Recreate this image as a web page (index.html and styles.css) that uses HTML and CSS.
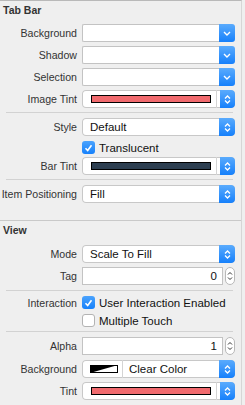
FILE: index.html
```html
<!DOCTYPE html>
<html lang="en">
<head>
    <meta charset="UTF-8">
    <meta name="viewport" content="width=device-width, initial-scale=1.0">
    <title>Attributes Inspector</title>
    <link rel="stylesheet" href="styles.css">
</head>
<body>
    <div class="inspector">
        <!-- Tab Bar section -->
        <h2 class="section-title">Tab Bar</h2>

        <div class="row first">
            <span class="label">Background</span>
            <div class="combo"><span class="combo-field"></span><span class="blue-btn"><svg width="8" height="5" viewBox="0 0 8 5"><path d="M1 1l3 3 3-3" fill="none" stroke="#fff" stroke-width="1.4"/></svg></span></div>
        </div>
        <div class="row">
            <span class="label">Shadow</span>
            <div class="combo"><span class="combo-field"></span><span class="blue-btn"><svg width="8" height="5" viewBox="0 0 8 5"><path d="M1 1l3 3 3-3" fill="none" stroke="#fff" stroke-width="1.4"/></svg></span></div>
        </div>
        <div class="row">
            <span class="label">Selection</span>
            <div class="combo"><span class="combo-field"></span><span class="blue-btn"><svg width="8" height="5" viewBox="0 0 8 5"><path d="M1 1l3 3 3-3" fill="none" stroke="#fff" stroke-width="1.4"/></svg></span></div>
        </div>
        <div class="row">
            <span class="label">Image Tint</span>
            <div class="well">
                <span class="well-main"><span class="swatch red"></span></span>
                <span class="blue-btn small"><svg width="7" height="11" viewBox="0 0 7 11"><path d="M1 4.5l2.5-2.5 2.5 2.5M1 6.5l2.5 2.5 2.5-2.5" fill="none" stroke="#fff" stroke-width="1.3"/></svg></span>
            </div>
        </div>

        <hr class="sep">

        <div class="row">
            <span class="label">Style</span>
            <div class="popup"><span class="popup-text">Default</span><span class="blue-btn"><svg width="7" height="11" viewBox="0 0 7 11"><path d="M1 4.5l2.5-2.5 2.5 2.5M1 6.5l2.5 2.5 2.5-2.5" fill="none" stroke="#fff" stroke-width="1.3"/></svg></span></div>
        </div>
        <div class="check-row translucent">
            <span class="label"></span>
            <span class="checkbox on"><svg width="9" height="8" viewBox="0 0 9 8"><path d="M1.5 4.2l2.2 2.3 3.8-5.2" fill="none" stroke="#fff" stroke-width="1.6"/></svg></span>
            <span class="check-text">Translucent</span>
        </div>
        <div class="row bar-tint">
            <span class="label">Bar Tint</span>
            <div class="well">
                <span class="well-main"><span class="swatch dark"></span></span>
                <span class="blue-btn small"><svg width="7" height="11" viewBox="0 0 7 11"><path d="M1 4.5l2.5-2.5 2.5 2.5M1 6.5l2.5 2.5 2.5-2.5" fill="none" stroke="#fff" stroke-width="1.3"/></svg></span>
            </div>
        </div>

        <hr class="sep">

        <div class="row after-sep">
            <span class="label">Item Positioning</span>
            <div class="popup"><span class="popup-text">Fill</span><span class="blue-btn"><svg width="7" height="11" viewBox="0 0 7 11"><path d="M1 4.5l2.5-2.5 2.5 2.5M1 6.5l2.5 2.5 2.5-2.5" fill="none" stroke="#fff" stroke-width="1.3"/></svg></span></div>
        </div>

        <!-- View section -->
        <hr class="section-sep">
        <h2 class="section-title">View</h2>

        <div class="row mode">
            <span class="label">Mode</span>
            <div class="popup"><span class="popup-text">Scale To Fill</span><span class="blue-btn"><svg width="7" height="11" viewBox="0 0 7 11"><path d="M1 4.5l2.5-2.5 2.5 2.5M1 6.5l2.5 2.5 2.5-2.5" fill="none" stroke="#fff" stroke-width="1.3"/></svg></span></div>
        </div>
        <div class="row">
            <span class="label">Tag</span>
            <div class="number">
                <span class="number-field">0</span>
                <span class="stepper"><svg width="6" height="12" viewBox="0 0 6 12"><path d="M1 4.5l2-2 2 2M1 7.5l2 2 2-2" fill="none" stroke="#333" stroke-width="1"/></svg></span>
            </div>
        </div>

        <hr class="sep sep-checks">

        <div class="check-row">
            <span class="label">Interaction</span>
            <span class="checkbox on"><svg width="9" height="8" viewBox="0 0 9 8"><path d="M1.5 4.2l2.2 2.3 3.8-5.2" fill="none" stroke="#fff" stroke-width="1.6"/></svg></span>
            <span class="check-text">User Interaction Enabled</span>
        </div>
        <div class="check-row second">
            <span class="label"></span>
            <span class="checkbox"></span>
            <span class="check-text">Multiple Touch</span>
        </div>

        <hr class="sep">

        <div class="row after-sep">
            <span class="label">Alpha</span>
            <div class="number">
                <span class="number-field">1</span>
                <span class="stepper"><svg width="6" height="12" viewBox="0 0 6 12"><path d="M1 4.5l2-2 2 2M1 7.5l2 2 2-2" fill="none" stroke="#333" stroke-width="1"/></svg></span>
            </div>
        </div>
        <div class="row wide-gap">
            <span class="label">Background</span>
            <div class="well">
                <span class="well-clear"><svg width="28" height="8" viewBox="0 0 28 8"><rect x="0.5" y="0.5" width="27" height="7" fill="#fff" stroke="#000"/><path d="M0 0h28L0 8z" fill="#000"/></svg></span>
                <span class="well-text">Clear Color</span>
                <span class="blue-btn"><svg width="7" height="11" viewBox="0 0 7 11"><path d="M1 4.5l2.5-2.5 2.5 2.5M1 6.5l2.5 2.5 2.5-2.5" fill="none" stroke="#fff" stroke-width="1.3"/></svg></span>
            </div>
        </div>
        <div class="row">
            <span class="label">Tint</span>
            <div class="well">
                <span class="well-main"><span class="swatch red"></span></span>
                <span class="blue-btn small"><svg width="7" height="11" viewBox="0 0 7 11"><path d="M1 4.5l2.5-2.5 2.5 2.5M1 6.5l2.5 2.5 2.5-2.5" fill="none" stroke="#fff" stroke-width="1.3"/></svg></span>
            </div>
        </div>

        <hr class="sep last">
    </div>
</body>
</html>
```

FILE: styles.css
```css
* {
    box-sizing: border-box;
    margin: 0;
    padding: 0;
}

body {
    font-family: "Liberation Sans", Arial, sans-serif;
    background-color: #efefef;
    color: #222;
}

.inspector {
    width: 242px;
    height: 405px;
    border-top: 1px solid #b9b9b9;
    border-right: 1px solid #d6d6d6;
    overflow: hidden;
}

.section-title {
    height: 19px;
    line-height: 19px;
    padding-left: 3px;
    font-size: 10.5px;
    font-weight: bold;
    color: #333;
}

.row {
    display: flex;
    align-items: center;
    height: 18px;
    margin-top: 4px;
}

.row.after-sep {
    margin-top: 4px;
}

.row.bar-tint {
    margin-top: 2px;
}

.row.mode {
    margin-top: 5px;
}

.row.wide-gap {
    margin-top: 5px;
}

.label {
    flex: 0 0 77px;
    text-align: right;
    font-size: 10.6px;
    color: #333;
    margin-right: 5px;
    white-space: nowrap;
}

/* blue button used by combo boxes, pop-ups and color wells */
.blue-btn {
    flex: 0 0 16px;
    height: 100%;
    display: flex;
    align-items: center;
    justify-content: center;
    background: linear-gradient(#5aabfd, #1680fb);
    border-radius: 0 3px 3px 0;
}

.blue-btn.small {
    flex-basis: 15px;
    margin-left: 3px;
}

.combo {
    display: flex;
    width: 153px;
    height: 18px;
}

.combo-field {
    flex: 1;
    background-color: white;
    border: 1px solid #c3c3c3;
    border-right: none;
    border-radius: 2px 0 0 2px;
}

.popup {
    display: flex;
    width: 153px;
    height: 18px;
    background-color: white;
    border-radius: 4px;
    box-shadow: inset 0 0 0 1px #c8c8c8;
    overflow: hidden;
}

.popup-text {
    flex: 1;
    padding-left: 8px;
    font-size: 11.5px;
    line-height: 18px;
    color: #111;
}

.well {
    display: flex;
    align-items: center;
    width: 153px;
    height: 18px;
    background-color: white;
    border-radius: 4px;
    box-shadow: inset 0 0 0 1px #c8c8c8;
    overflow: hidden;
}

.well-main {
    flex: 1;
    height: 100%;
    display: flex;
    align-items: center;
    padding: 0 5px 0 9px;
    border-right: 1px solid #d4d4d4;
}

.swatch {
    flex: 1;
    height: 8px;
    border: 1px solid #000;
}

.swatch.red {
    background-color: #f06a6e;
}

.swatch.dark {
    background-color: #2c3e50;
}

.well-clear {
    height: 100%;
    display: flex;
    align-items: center;
    padding: 0 4px 0 8px;
    border-right: 1px solid #d4d4d4;
}

.well-text {
    flex: 1;
    padding-left: 6px;
    font-size: 11.5px;
    color: #111;
}

.number {
    display: flex;
    align-items: center;
    height: 18px;
}

.number-field {
    width: 141px;
    height: 18px;
    background-color: white;
    border: 1px solid #c3c3c3;
    text-align: right;
    padding-right: 5px;
    font-size: 11.5px;
    line-height: 16px;
    color: #111;
}

.stepper {
    width: 10px;
    height: 18px;
    margin-left: 2px;
    border: 1px solid #b9b9b9;
    border-radius: 5px;
    background-color: white;
    display: flex;
    align-items: center;
    justify-content: center;
}

.check-row {
    display: flex;
    align-items: center;
    height: 13px;
}

.check-row.translucent {
    height: 15px;
    margin-top: 4px;
}

.check-row.second {
    margin-top: 5px;
}

.checkbox {
    flex: 0 0 13px;
    height: 13px;
    border-radius: 3px;
    background-color: white;
    border: 1px solid #b3b3b3;
    display: flex;
    align-items: center;
    justify-content: center;
}

.checkbox.on {
    border: none;
    background: linear-gradient(#4ba3fd, #1681fb);
}

.check-text {
    margin-left: 4px;
    font-size: 11.5px;
    color: #111;
    white-space: nowrap;
}

.sep {
    border: none;
    border-top: 1px solid #d2d2d2;
    margin: 4px 8px 5px 6px;
}

.sep-checks {
    margin-top: 5px;
}

.sep.last {
    margin-top: 5px;
}

.section-sep {
    border: none;
    border-top: 1px solid #c9c9c9;
    margin-top: 17px;
}
```
